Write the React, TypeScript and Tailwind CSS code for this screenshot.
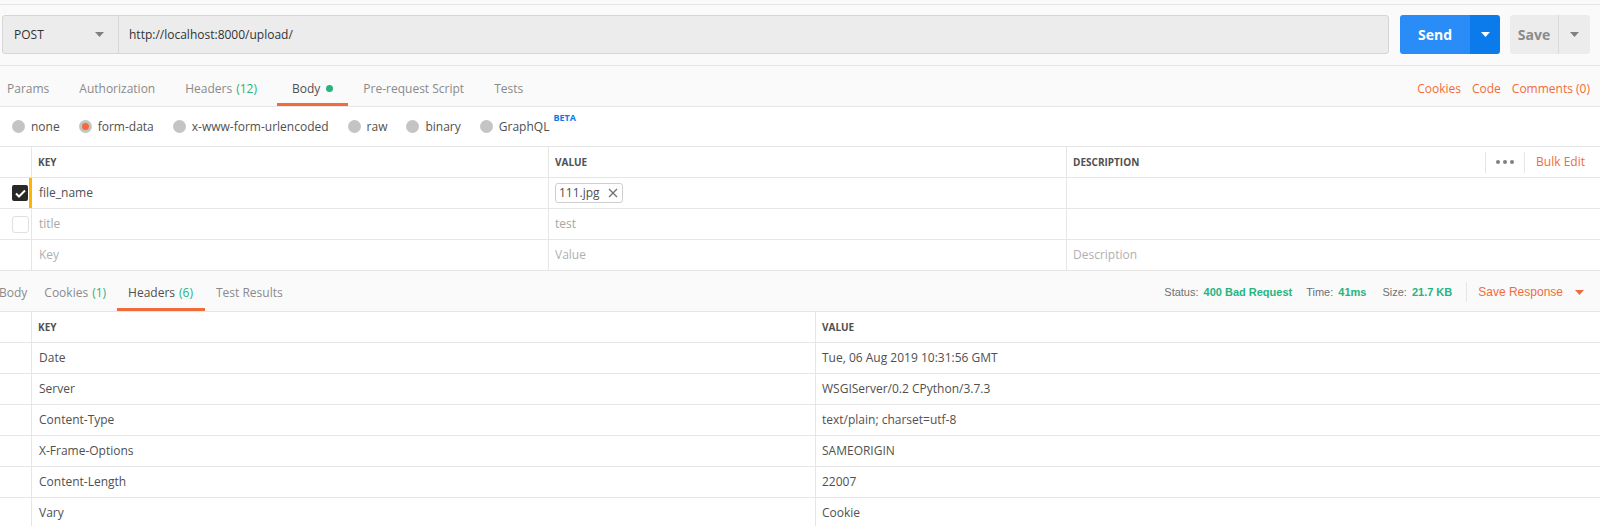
import type { ReactNode } from "react";

const line = "border-[#e6e6e6]";

function Caret({ className = "" }: { className?: string }) {
  return (
    <svg width="9" height="5" viewBox="0 0 9 5" className={className}>
      <path d="M0 0h9L4.5 5z" fill="currentColor" />
    </svg>
  );
}

function Radio({ label, checked, extra }: { label: string; checked?: boolean; extra?: ReactNode }) {
  return (
    <div className="flex items-center mr-[19px]">
      <span className="w-[13px] h-[13px] rounded-full bg-[#c4c4c4] flex items-center justify-center">
        {checked && <span className="w-[7px] h-[7px] rounded-full bg-[#f26b3a]" />}
      </span>
      <span className="ml-[6px] text-[12px] text-[#505050]">{label}</span>
      {extra}
    </div>
  );
}

function Checkbox({ checked }: { checked?: boolean }) {
  return checked ? (
    <span className="w-[16px] h-[16px] rounded-[2px] bg-[#282828] flex items-center justify-center">
      <svg width="11" height="9" viewBox="0 0 11 9">
        <path d="M1 4.5l3 3L10 1.5" stroke="#fff" strokeWidth="2" fill="none" />
      </svg>
    </span>
  ) : (
    <span className="w-[17px] h-[17px] rounded-[3px] border border-[#e0e0e0] bg-white" />
  );
}

const reqRows = [
  { key: "file_name", value: "file", checked: true, keyColor: "text-[#505050]", valColor: "" },
  { key: "title", value: "test", checked: false, keyColor: "text-[#a8a8a8]", valColor: "text-[#a8a8a8]" },
  { key: "Key", value: "Value", desc: "Description", checked: null, keyColor: "text-[#b0b0b0]", valColor: "text-[#b0b0b0]" },
];

const resHeaders = [
  ["Date", "Tue, 06 Aug 2019 10:31:56 GMT"],
  ["Server", "WSGIServer/0.2 CPython/3.7.3"],
  ["Content-Type", "text/plain; charset=utf-8"],
  ["X-Frame-Options", "SAMEORIGIN"],
  ["Content-Length", "22007"],
  ["Vary", "Cookie"],
];

const tab = "flex items-center pt-[8px] border-b-[3px]";
const resTab = "flex items-center pt-[6px] border-b-[3px]";

export default function App() {
  return (
    <div className="w-[1600px] h-[526px] overflow-hidden bg-white font-['Open_Sans',sans-serif] text-[#505050]">
      {/* request header area */}
      <div className={`h-[66px] bg-[#fafafa] border-b ${line} flex flex-col`}>
        <div className={`h-[5px] border-b ${line} bg-[#fafafa]`} />
        <div className="flex items-center h-[39px] mt-[10px] pl-[2px] pr-[10px]">
          <div className="flex-1 flex h-full border border-[#d6d6d6] rounded-[3px] bg-[#ececec]">
            <div className="w-[116px] flex items-center justify-between pl-[11px] pr-[14px] border-r border-[#d6d6d6]">
              <span className="text-[12px] text-[#333]">POST</span>
              <Caret className="text-[#808080]" />
            </div>
            <div className="flex-1 flex items-center pl-[10px] text-[12px] text-[#333]">
              http://localhost:8000/upload/
            </div>
          </div>
          <div className="ml-[11px] w-[100px] h-full flex rounded-[3px] overflow-hidden">
            <div className="w-[70px] bg-[#2a8cf6] flex items-center justify-center text-white text-[14px] font-bold">
              Send
            </div>
            <div className="flex-1 bg-[#0b7bec] flex items-center justify-center text-white">
              <Caret />
            </div>
          </div>
          <div className="ml-[10px] w-[80px] h-full flex rounded-[3px] overflow-hidden bg-[#ececec]">
            <div className="w-[49px] flex items-center justify-center text-[#8a8a8a] text-[14px] font-bold border-r border-[#dadada]">
              Save
            </div>
            <div className="flex-1 flex items-center justify-center text-[#808080]">
              <Caret />
            </div>
          </div>
        </div>
      </div>

      {/* request tabs */}
      <div className={`h-[41px] bg-[#fafafa] border-b ${line} flex items-stretch justify-between`}>
        <div className="flex items-stretch text-[12px] text-[#8a8a8a]">
          <div className={`${tab} border-transparent pl-[7px] pr-[15px]`}>Params</div>
          <div className={`${tab} border-transparent px-[15px]`}>Authorization</div>
          <div className={`${tab} border-transparent pl-[15px] pr-[20px]`}>
            Headers<span className="ml-[4px] text-[#26b47f]">(12)</span>
          </div>
          <div className={`${tab} border-[#f26b3a] px-[15px] text-[#505050]`}>
            Body<span className="ml-[6px] w-[7px] h-[7px] rounded-full bg-[#26b47f]" />
          </div>
          <div className={`${tab} border-transparent px-[15px]`}>Pre-request Script</div>
          <div className={`${tab} border-transparent px-[15px]`}>Tests</div>
        </div>
        <div className="flex items-center pr-[10px] text-[12px] text-[#f26b3a] gap-[11px] pt-[6px]">
          <span>Cookies</span>
          <span>Code</span>
          <span>Comments (0)</span>
        </div>
      </div>

      {/* body type radios */}
      <div className="h-[39px] flex items-center pl-[12px]">
        <Radio label="none" />
        <Radio label="form-data" checked />
        <Radio label="x-www-form-urlencoded" />
        <Radio label="raw" />
        <Radio label="binary" />
        <Radio
          label="GraphQL"
          extra={<span className="self-start -mt-[7px] ml-[4px] text-[9px] font-bold text-[#097bed]">BETA</span>}
        />
      </div>

      {/* form-data table */}
      <div className={`border-t ${line}`}>
        <div className={`grid grid-cols-[32px_517px_518px_1fr] h-[31px] border-b ${line}`}>
          <div className={`border-r ${line}`} />
          <div className={`border-r ${line} flex items-center pl-[6px] text-[10px] font-bold text-[#505050]`}>KEY</div>
          <div className={`border-r ${line} flex items-center pl-[6px] text-[10px] font-bold text-[#505050]`}>VALUE</div>
          <div className="flex items-center pl-[6px] text-[10px] font-bold text-[#505050]">
            <span className="flex-1">DESCRIPTION</span>
            <span className={`h-[21px] border-l ${line} ml-[10px]`} />
            <span className="ml-[10px] flex gap-[3px]">
              <span className="w-[4px] h-[4px] rounded-full bg-[#808080]" />
              <span className="w-[4px] h-[4px] rounded-full bg-[#808080]" />
              <span className="w-[4px] h-[4px] rounded-full bg-[#808080]" />
            </span>
            <span className={`h-[21px] border-l ${line} ml-[10px]`} />
            <span className="ml-[11px] mr-[15px] text-[12px] font-normal text-[#f26b3a]">Bulk Edit</span>
          </div>
        </div>
        {reqRows.map((r, i) => (
          <div key={i} className={`grid grid-cols-[32px_517px_518px_1fr] h-[31px] border-b ${line}`}>
            <div className={`relative border-r ${line} flex items-center pl-[12px]`}>
              {r.checked !== null && <Checkbox checked={r.checked} />}
              {r.checked && <span className="absolute right-[-1px] top-0 bottom-0 w-[3px] bg-[#ffb400]" />}
            </div>
            <div className={`border-r ${line} flex items-center pl-[7px] text-[12px] ${r.keyColor}`}>{r.key}</div>
            <div className={`border-r ${line} flex items-center pl-[6px] text-[12px] ${r.valColor}`}>
              {r.value === "file" ? (
                <span className="h-[20px] flex items-center border border-[#cfcfcf] rounded-[3px] pl-[3px] pr-[4px] text-[#505050]">
                  111.jpg
                  <svg width="10" height="10" viewBox="0 0 10 10" className="ml-[8px]">
                    <path d="M1 1l8 8M9 1L1 9" stroke="#707070" strokeWidth="1.3" />
                  </svg>
                </span>
              ) : (
                r.value
              )}
            </div>
            <div className="flex items-center pl-[6px] text-[12px] text-[#b0b0b0]">{r.desc ?? ""}</div>
          </div>
        ))}
      </div>

      {/* response bar */}
      <div className={`h-[41px] bg-[#fafafa] border-b ${line} flex items-stretch justify-between`}>
        <div className="flex items-stretch text-[12px] text-[#8a8a8a]">
          <div className={`${resTab} border-transparent -ml-[1px] pr-[9px]`}>Body</div>
          <div className={`${resTab} border-transparent pl-[8px] pr-[11px]`}>
            Cookies<span className="ml-[4px] text-[#26b47f]">(1)</span>
          </div>
          <div className={`${resTab} border-[#f26b3a] pl-[11px] pr-[12px] text-[#505050]`}>
            Headers<span className="ml-[4px] text-[#26b47f]">(6)</span>
          </div>
          <div className={`${resTab} border-transparent px-[11px]`}>Test Results</div>
        </div>
        <div className="flex items-center font-['Liberation_Sans',Arial,sans-serif] text-[11px] pr-[16px] pt-[2px]">
          <span className="text-[#707070]">Status:</span>
          <span className="ml-[5px] text-[#26b47f] font-bold">400 Bad Request</span>
          <span className="ml-[14px] text-[#707070]">Time:</span>
          <span className="ml-[5px] text-[#26b47f] font-bold">41ms</span>
          <span className="ml-[16px] text-[#707070]">Size:</span>
          <span className="ml-[5px] text-[#26b47f] font-bold">21.7 KB</span>
          <span className={`ml-[14px] h-[20px] border-l ${line}`} />
          <span className="ml-[11px] text-[12px] text-[#f26b3a]">Save Response</span>
          <Caret className="ml-[12px] text-[#f26b3a]" />
        </div>
      </div>

      {/* response headers table */}
      <div className={`grid grid-cols-[32px_784px_1fr] h-[31px] border-b ${line}`}>
        <div className={`border-r ${line}`} />
        <div className={`border-r ${line} flex items-center pl-[6px] text-[10px] font-bold text-[#505050]`}>KEY</div>
        <div className="flex items-center pl-[6px] text-[10px] font-bold text-[#505050]">VALUE</div>
      </div>
      {resHeaders.map(([k, v]) => (
        <div key={k} className={`grid grid-cols-[32px_784px_1fr] h-[31px] border-b ${line}`}>
          <div className={`border-r ${line}`} />
          <div className={`border-r ${line} flex items-center pl-[7px] text-[12px] text-[#505050]`}>{k}</div>
          <div className="flex items-center pl-[6px] text-[12px] text-[#505050]">{v}</div>
        </div>
      ))}
    </div>
  );
}
